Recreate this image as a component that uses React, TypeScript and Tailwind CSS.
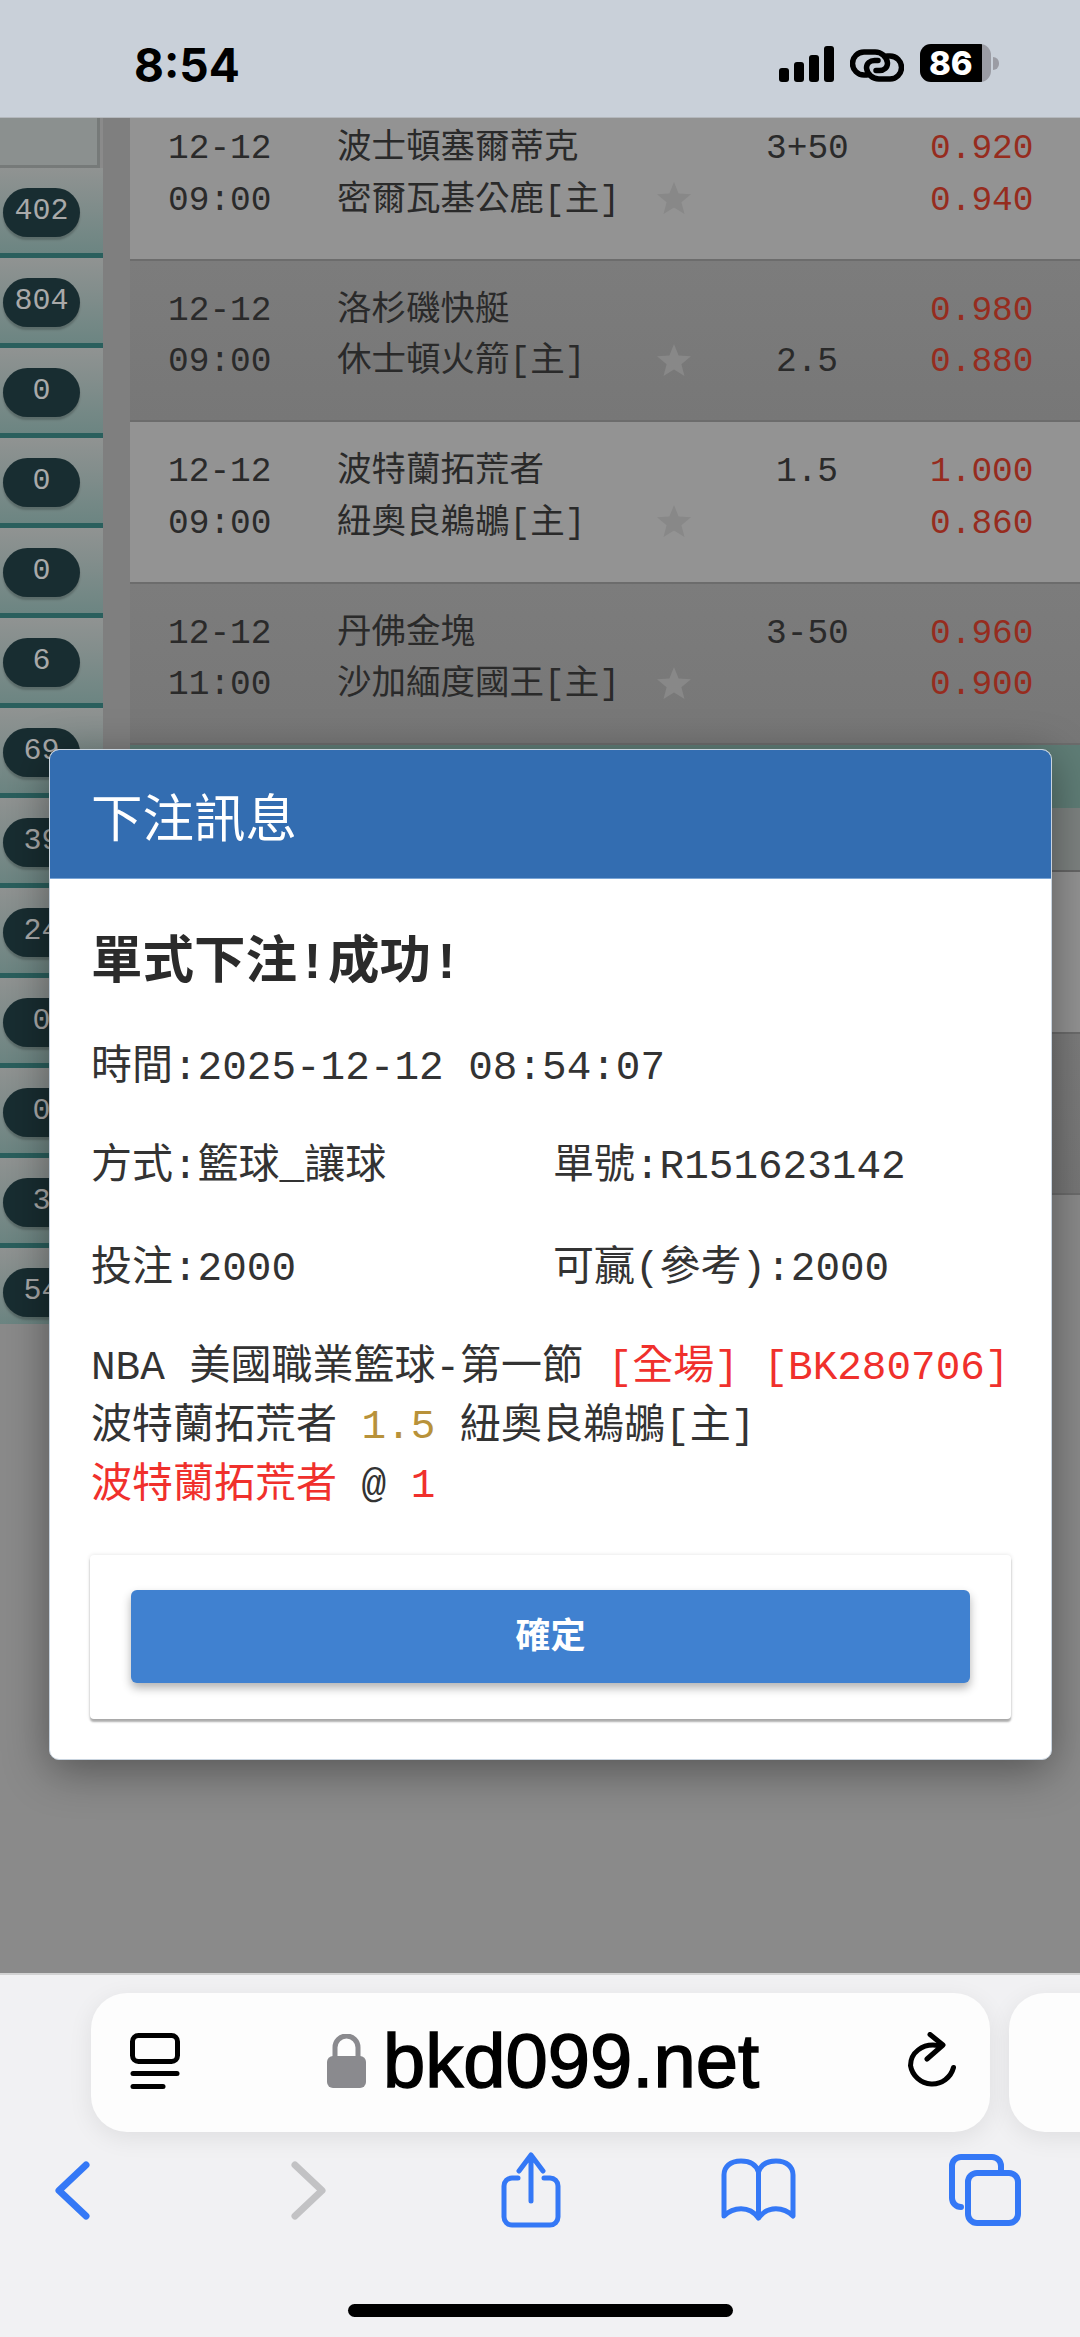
import React from 'react';

const mono = "font-['Liberation_Mono','Noto_Sans_CJK_TC',monospace]";

const games = [
  { date: '12-12', time: '09:00', away: '波士頓塞爾蒂克', home: '密爾瓦基公鹿', top: '3+50', bottom: '', odd1: '0.920', odd2: '0.940', dark: false },
  { date: '12-12', time: '09:00', away: '洛杉磯快艇', home: '休士頓火箭', top: '', bottom: '2.5', odd1: '0.980', odd2: '0.880', dark: true },
  { date: '12-12', time: '09:00', away: '波特蘭拓荒者', home: '紐奧良鵜鶘', top: '1.5', bottom: '', odd1: '1.000', odd2: '0.860', dark: false },
  { date: '12-12', time: '11:00', away: '丹佛金塊', home: '沙加緬度國王', top: '3-50', bottom: '', odd1: '0.960', odd2: '0.900', dark: true },
];

const later = [
  { date: '', time: '', away: '', home: '', top: '', bottom: '', odd1: '', odd2: '', dark: false },
  { date: '', time: '', away: '', home: '', top: '', bottom: '', odd1: '', odd2: '', dark: true },
];

const counts = ['402', '804', '0', '0', '0', '6', '69', '39', '24', '0', '0', '3', '54'];

function Star() {
  return (
    <svg width="34" height="32" viewBox="0 0 34 32" className="mt-[8px]">
      <path d="M17 0l4.6 11.6L34 12.3l-9.6 7.9L27.5 32 17 25.4 6.5 32l3.1-11.8L0 12.3l12.4-.7z" fill="#888888" />
    </svg>
  );
}

type Game = (typeof games)[number];

function GameRow({ g }: { g: Game }) {
  return (
    <div
      className={`h-[161.5px] pl-[38px] pt-[24px] border-b-2 border-[#6c6c6c] flex text-[34.5px] leading-[51.5px] text-[#2a2a2a] ${mono} ${
        g.dark ? 'bg-gradient-to-b from-[#7c7c7c] to-[#777777]' : 'bg-[#939393]'
      }`}
    >
      <div className="w-[169px]">
        <div>{g.date}</div>
        <div>{g.time}</div>
      </div>
      <div className="w-[320px] whitespace-nowrap">
        <div>{g.away}</div>
        <div>{g.home && `${g.home}[主]`}</div>
      </div>
      <div className="w-[109px] pt-[51px]">{g.date && <Star />}</div>
      <div className="w-[82px] text-center whitespace-nowrap">
        <div className="h-[51.5px]">{g.top}</div>
        <div className="h-[51.5px]">{g.bottom}</div>
      </div>
      <div className="ml-[82px] text-[#962c1e]">
        <div>{g.odd1}</div>
        <div>{g.odd2}</div>
      </div>
    </div>
  );
}

function LinkIcon() {
  return (
    <svg width="54" height="33" viewBox="0 0 54 33" fill="none" stroke="black" strokeWidth="5.5" strokeLinecap="round">
      <path d="M17 26H14A11.5 11.5 0 0 1 14 3H25A12.5 12.5 0 0 1 37.5 14C37.5 18.5 34 21.5 29.5 21.5H26" />
      <path d="M37 7H40A11.5 11.5 0 0 1 40 30H29A12.5 12.5 0 0 1 16.5 19C16.5 14.5 20 11.5 24.5 11.5H28" />
    </svg>
  );
}

function StatusBar() {
  return (
    <div className="h-[118px] bg-[#c9d0d9] border-b border-[#b4b8bd] flex items-start pl-[134px]">
      <div className="mt-[38px] text-[46px] leading-[54px] font-bold text-black font-['Inter',sans-serif]">8:54</div>
      <div className="ml-[539px] mt-[44px] flex items-end h-[38px]">
        <div className="flex items-end gap-[5px]">
          <div className="w-[10px] h-[14px] rounded-[3px] bg-black" />
          <div className="w-[10px] h-[20px] rounded-[3px] bg-black" />
          <div className="w-[10px] h-[27px] rounded-[3px] bg-black" />
          <div className="w-[10px] h-[36px] rounded-[3px] bg-black" />
        </div>
        <div className="ml-[16px]">
          <LinkIcon />
        </div>
        <div className="ml-[16px] flex items-center">
          <div className="w-[71px] h-[38px] rounded-[11px] overflow-hidden flex bg-[#9b9ca4]">
            <div className="w-[62px] bg-black text-white text-[33px] leading-[38px] font-extrabold text-center font-['Inter',sans-serif]">86</div>
          </div>
          <div className="ml-[2px] w-[6px] h-[13px] rounded-r-full bg-[#9b9ca4]" />
        </div>
      </div>
    </div>
  );
}

function CountColumn() {
  return (
    <div className="w-[103px] shrink-0">
      <div className="h-[50px] w-[103px] pr-[3px]">
        <div className="h-full bg-[#8b908f] border-r-[3px] border-b-[3px] border-[#767a79]" />
      </div>
      {counts.map((c, i) => (
        <div
          key={i}
          className={`px-[3px] pt-[20px] bg-gradient-to-b from-[#909392] to-[#6c8582] ${
            i === counts.length - 1 ? 'h-[76px]' : 'h-[90px] border-b-[5px] border-[#2a5f5d]'
          }`}
        >
          <div className={`h-[49px] w-[77px] rounded-full bg-[#182d31] shadow-[0_3px_2px_rgba(0,0,0,0.2)] text-center text-[30px] leading-[46px] text-[#a9a9a9] ${mono}`}>
            {c}
          </div>
        </div>
      ))}
    </div>
  );
}

function Modal() {
  return (
    <div className={`absolute left-[49px] top-[631px] w-[1003px] h-[1011px] rounded-[10px] bg-white border border-[#c9d4df] shadow-[0_10px_45px_rgba(0,0,0,0.4)] overflow-hidden text-[41px] text-[#333333] ${mono}`}>
      <div className="h-[129px] bg-[#336db1] border-b border-[#7aa5d6] pl-[41px] text-[51.5px] leading-[129px] text-white font-['Noto_Sans_CJK_TC',sans-serif]">
        下注訊息
      </div>
      <div className="pl-[41px]">
        <div className="mt-[55px] h-[60px] text-[51.5px] leading-[60px] font-bold text-[#2b2b2b]">單式下注!成功!</div>
        <div className="mt-[45px] leading-[59px] whitespace-pre">時間:2025-12-12 08:54:07</div>
        <div className="mt-[40px] flex leading-[59px]">
          <div className="w-[462px]">方式:籃球_讓球</div>
          <div>單號:R151623142</div>
        </div>
        <div className="mt-[43px] flex leading-[59px]">
          <div className="w-[462px]">投注:2000</div>
          <div>可贏(參考):2000</div>
        </div>
        <div className="mt-[40px] leading-[59px] whitespace-pre">
          <div>
            NBA 美國職業籃球-第一節 <span className="text-[#f0302c]">[全場] [BK280706]</span>
          </div>
          <div>
            波特蘭拓荒者 <span className="text-[#b8923a]">1.5</span> 紐奧良鵜鶘[主]
          </div>
          <div>
            <span className="text-[#f0302c]">波特蘭拓荒者</span> @ <span className="text-[#f0302c]">1</span>
          </div>
        </div>
      </div>
      <div className="mx-[40px] mt-[39px] h-[164px] rounded-[4px] bg-white shadow-[0_3px_2px_rgba(0,0,0,0.3),0_0_4px_rgba(0,0,0,0.12)] px-[41px] pt-[35px]">
        <div className="h-[93px] rounded-[6px] bg-[#4081d0] shadow-[0_5px_10px_rgba(0,0,0,0.3)] text-center text-[35px] leading-[85px] font-bold text-white font-['Noto_Sans_CJK_TC',sans-serif]">
          確定
        </div>
      </div>
    </div>
  );
}

function ReaderIcon() {
  return (
    <svg width="50" height="56" viewBox="0 0 50 56" fill="none" stroke="black" strokeLinecap="round">
      <rect x="2.5" y="2.5" width="45" height="26" rx="6" strokeWidth="5" />
      <path d="M3 40.5H47" strokeWidth="5" />
      <path d="M3 53.5H33" strokeWidth="5" />
    </svg>
  );
}

function LockIcon() {
  return (
    <svg width="39" height="54" viewBox="0 0 39 54">
      <path d="M8 24V13.5a11.5 11.5 0 0 1 23 0V24" fill="none" stroke="#8a8a8e" strokeWidth="5" />
      <rect x="0" y="22" width="39" height="32" rx="6" fill="#8a8a8e" />
    </svg>
  );
}

function ReloadIcon() {
  return (
    <svg width="48" height="57" viewBox="0 0 48 57" fill="none" stroke="black" strokeWidth="5" strokeLinecap="round" strokeLinejoin="round">
      <path d="M30 13.5C14 11 2.5 21 2.5 33.5a22 22 0 0 0 43 2" />
      <path d="M22 2.5L35 13 19 27" />
    </svg>
  );
}

function SafariBar() {
  const blue = '#3478f6';
  return (
    <div className="h-[364px] bg-[#f1f1f3] border-t-2 border-[#d2d2d2] overflow-hidden">
      <div className="mt-[18px] flex pl-[91px] w-[1300px]">
        <div className="w-[899px] shrink-0 h-[139px] rounded-[36px] bg-[#fdfdfd] shadow-[0_6px_24px_rgba(0,0,0,0.08)] flex items-center pl-[39px] pb-[4px]">
          <ReaderIcon />
          <div className="ml-[147px]">
            <LockIcon />
          </div>
          <div className="ml-[17px] w-[380px] whitespace-nowrap text-[76px] leading-[80px] text-black font-['Liberation_Sans',sans-serif] [-webkit-text-stroke:1.5px_black]">
            bkd099.net
          </div>
          <div className="ml-[145px]">
            <ReloadIcon />
          </div>
        </div>
        <div className="ml-[19px] w-[200px] h-[139px] rounded-[36px] bg-[#fdfdfd] shadow-[0_6px_24px_rgba(0,0,0,0.08)]" />
      </div>
      <div className="mt-[20px] h-[76px] flex items-center pl-[55px]">
        <svg width="35" height="59" viewBox="0 0 35 59" fill="none" stroke={blue} strokeWidth="7" strokeLinecap="round" strokeLinejoin="round">
          <path d="M31 4L4 29.5 31 55" />
        </svg>
        <svg className="ml-[201px]" width="35" height="59" viewBox="0 0 35 59" fill="none" stroke="#c2c2c4" strokeWidth="7" strokeLinecap="round" strokeLinejoin="round">
          <path d="M4 4L31 29.5 4 55" />
        </svg>
        <svg className="ml-[175px]" width="60" height="76" viewBox="0 0 60 76" fill="none" stroke={blue} strokeWidth="5" strokeLinecap="round" strokeLinejoin="round">
          <path d="M17 26H11A8 8 0 0 0 3 34V65A8 8 0 0 0 11 73H49A8 8 0 0 0 57 65V34A8 8 0 0 0 49 26H43" />
          <path d="M30 49V3M18 19L30 3 42 19" />
        </svg>
        <svg className="ml-[160px]" width="75" height="64" viewBox="0 0 75 64" fill="none" stroke={blue} strokeWidth="5" strokeLinecap="round" strokeLinejoin="round">
          <path d="M37.5 60V14C35 6 28 3 20 3 9 3 3 9 3 17V58C12 49 28 47 37.5 60 47 47 63 49 72 58V17C72 9 66 3 55 3 47 3 40 6 37.5 14" />
        </svg>
        <svg className="ml-[153px]" width="72" height="72" viewBox="0 0 72 72" fill="none" stroke={blue} strokeWidth="6" strokeLinecap="round" strokeLinejoin="round">
          <path d="M12 53A9 9 0 0 1 3 44V12A9 9 0 0 1 12 3H43A9 9 0 0 1 52 12V16" />
          <rect x="19" y="19" width="50" height="50" rx="9" />
        </svg>
      </div>
      <div className="mt-[76px] ml-[348px] w-[385px] h-[13px] rounded-full bg-black" />
    </div>
  );
}

export default function App() {
  return (
    <div className="w-[1080px] h-[2337px] flex flex-col overflow-hidden">
      <StatusBar />
      <div className="relative h-[1855px] bg-[#8a8a8a] overflow-hidden">
        <div className="flex">
          <CountColumn />
          <div className="w-[27px] h-[1206px] bg-[#7f7f7f]" />
          <div className="flex-1 -mt-[19px]">
            {games.map((g, i) => (
              <GameRow key={i} g={g} />
            ))}
            <div className="h-[63px] bg-[#5f7d76]" />
            <div className="h-[64px] bg-[#7d8280] border-b-2 border-[#666666]" />
            {later.map((g, i) => (
              <GameRow key={i} g={g} />
            ))}
          </div>
        </div>
        <Modal />
      </div>
      <SafariBar />
    </div>
  );
}
